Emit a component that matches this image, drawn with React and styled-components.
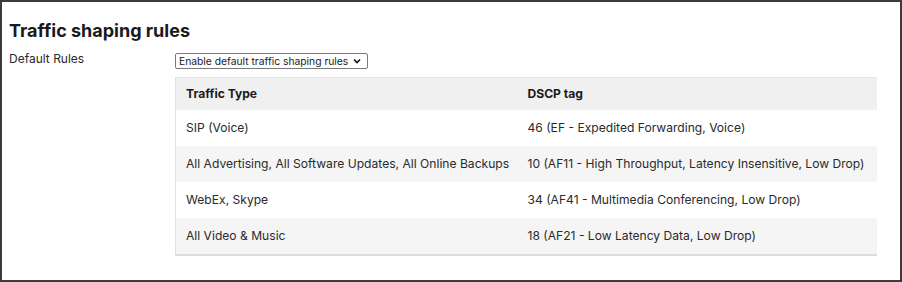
import React from 'react'
import { styled, createGlobalStyle } from 'styled-components'

const GlobalStyle = createGlobalStyle`
  html, body {
    margin: 0;
    padding: 0;
    background: #fff;
  }
  body {
    font-family: Inter, "Noto Sans", sans-serif;
    color: #222;
  }
`

const Frame = styled.div`
  box-sizing: border-box;
  width: 902px;
  height: 282px;
  border: 2px solid #3c3c3c;
  padding: 18px 0 0 7px;
`

const Title = styled.h2`
  margin: 0 0 9px;
  font-size: 18px;
  line-height: 22px;
  font-weight: 700;
  color: #1a1a1a;
`

const FieldRow = styled.div`
  display: grid;
  grid-template-columns: 166px 702px;
`

const Label = styled.div`
  font-size: 12px;
  line-height: 16px;
  color: #2a2a2a;
`

const Field = styled.div`
  display: flex;
  flex-direction: column;
  align-items: flex-start;
  gap: 8px;
  padding-top: 2px;
`

const SelectBox = styled.div`
  box-sizing: border-box;
  width: 193px;
  height: 16px;
  border: 1px solid #7a7a7a;
  border-radius: 2px;
  display: flex;
  align-items: center;
  justify-content: space-between;
  padding: 0 6px 0 3px;
  font-size: 10.3px;
  line-height: 14px;
  white-space: nowrap;
  color: #222;
`

const Table = styled.table`
  width: 702px;
  table-layout: fixed;
  border-collapse: collapse;
  font-size: 12.1px;
  color: #2a2a2a;
  border-left: 1px solid #e2e2e2;
  border-bottom: 2px solid #dcdcdc;
`

const HeadCell = styled.th`
  text-align: left;
  font-weight: 700;
  height: 32px;
  padding: 0 10px;
  background: #f0f0f0;
  border-top: 1px solid #e6e6e6;
  color: #1a1a1a;
  width: ${p => p.$w || 'auto'};
  box-sizing: border-box;
`

const Row = styled.tr`
  background: ${p => (p.$alt ? '#f5f5f5' : '#fff')};
`

const Cell = styled.td`
  height: 36px;
  padding: 0 10px;
  white-space: nowrap;
  overflow: hidden;
`

const rules = [
  ['SIP (Voice)', '46 (EF - Expedited Forwarding, Voice)'],
  ['All Advertising, All Software Updates, All Online Backups', '10 (AF11 - High Throughput, Latency Insensitive, Low Drop)'],
  ['WebEx, Skype', '34 (AF41 - Multimedia Conferencing, Low Drop)'],
  ['All Video & Music', '18 (AF21 - Low Latency Data, Low Drop)'],
]

export default function App() {
  return (
    <>
      <GlobalStyle />
      <Frame>
        <Title>Traffic shaping rules</Title>
        <FieldRow>
          <Label>Default Rules</Label>
          <Field>
            <SelectBox>
              <span>Enable default traffic shaping rules</span>
              <svg width="8" height="6" viewBox="0 0 8 6">
                <path d="M1 1.5 L4 4.5 L7 1.5" fill="none" stroke="#111" strokeWidth="1.6" />
              </svg>
            </SelectBox>
            <Table>
              <thead>
                <tr>
                  <HeadCell $w="342px">Traffic Type</HeadCell>
                  <HeadCell>DSCP tag</HeadCell>
                </tr>
              </thead>
              <tbody>
                {rules.map((r, i) => (
                  <Row key={i} $alt={i % 2 === 1}>
                    <Cell>{r[0]}</Cell>
                    <Cell>{r[1]}</Cell>
                  </Row>
                ))}
              </tbody>
            </Table>
          </Field>
        </FieldRow>
      </Frame>
    </>
  )
}
